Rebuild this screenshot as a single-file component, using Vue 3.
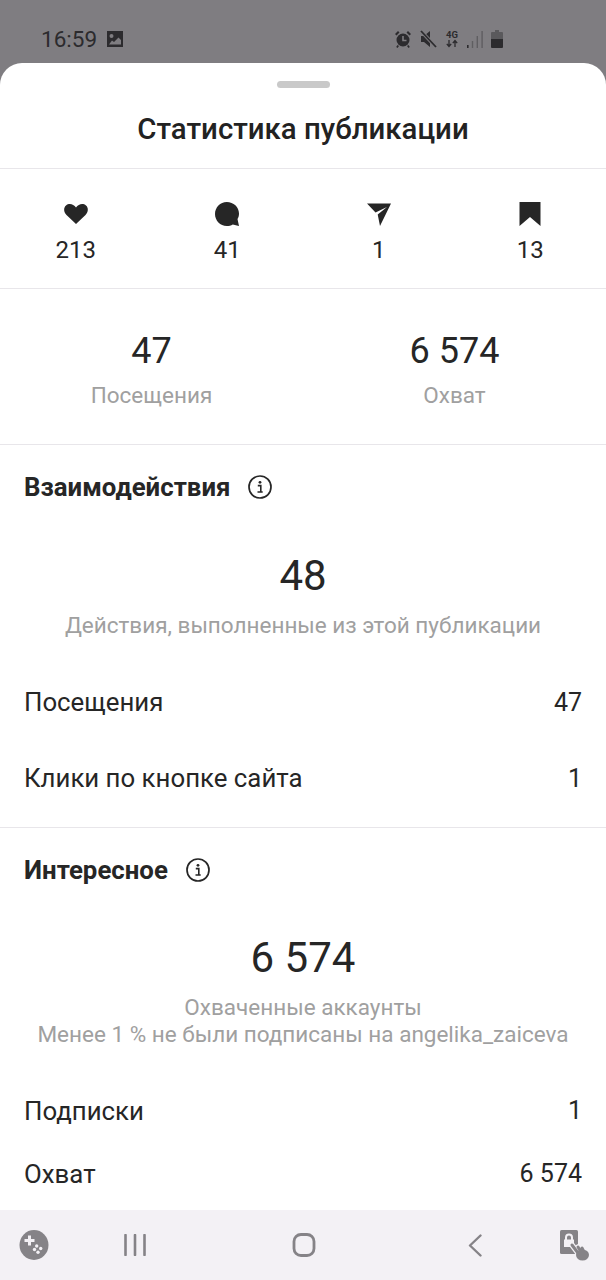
<template>
  <div class="screen">
    <div class="status-bar">
      <span class="clock">16:59</span>
      <svg class="st-pic" viewBox="0 0 18 18" width="18" height="18">
        <path fill-rule="evenodd" d="M1 1h16v16H1zM5.500 4a2 2 0 1 0 0 4 2 2 0 0 0 0-4zM3 14.500h12V10l-2.500-2.500L8 12l-2-1.500z" />
      </svg>
      <div class="st-right">
        <svg viewBox="0 0 18 20" width="18" height="20">
          <circle cx="9" cy="11" r="6.500" />
          <path d="M1 5l3-3 1.500 1.500-3 3zM17 5l-3-3-1.500 1.500 3 3zM3.500 16l1.500 1-1.500 2-1.300-1zM14.500 16l-1.500 1 1.500 2 1.300-1z" />
          <path d="M9 7v4.500h3.500" fill="none" stroke="#7f7d81" stroke-width="1.600" />
        </svg>
        <svg viewBox="0 0 17 18" width="17" height="18">
          <path d="M1 6h3l6-5v16l-6-5H1z" />
          <path d="M1 1l15 16" stroke="#7f7d81" stroke-width="3.500" />
          <path d="M1 1l15 16" stroke="#2c2b2e" stroke-width="1.800" />
        </svg>
        <svg class="st-net" viewBox="0 0 14 18" width="14" height="18">
          <text x="7" y="7.500" text-anchor="middle" class="st-4g">4G</text>
          <path d="M4 10v6M1.800 13.800L4 16.500l2.200-2.700M10 17v-6M7.800 13.200L10 10.500l2.200 2.700" fill="none" stroke="#2c2b2e" stroke-width="1.300" />
        </svg>
        <svg class="st-signal" viewBox="0 0 16 17" width="16" height="17">
          <rect x="0" y="14" width="1.600" height="3" fill="#2c2b2e" />
          <rect x="4.800" y="10" width="1.400" height="7" />
          <rect x="9.600" y="5" width="1.400" height="12" />
          <rect x="14.400" y="0" width="1.400" height="17" />
        </svg>
        <svg class="st-batt" viewBox="0 0 12 18" width="12" height="18">
          <path d="M4 0h4v2h3a1 1 0 0 1 1 1v6H0V3a1 1 0 0 1 1-1h3z" fill="#5a595c" />
          <path d="M0 9h12v8a1 1 0 0 1-1 1H1a1 1 0 0 1-1-1z" />
        </svg>
      </div>
    </div>

    <div class="sheet">
      <div class="head">
        <div class="handle"></div>
        <h1 class="title">Статистика публикации</h1>
      </div>

      <div class="icons-row">
        <div v-for="s in stats" :key="s.name" class="icon-stat">
          <svg viewBox="0 0 26 26" width="26" height="26" v-html="s.icon"></svg>
          <span>{{ s.value }}</span>
        </div>
      </div>

      <div class="totals">
        <div class="total">
          <div class="num">47</div>
          <div class="muted">Посещения</div>
        </div>
        <div class="total">
          <div class="num">6 574</div>
          <div class="muted">Охват</div>
        </div>
      </div>

      <section v-for="sec in sections" :key="sec.title" :class="['section', sec.cls]">
        <div class="sec-head">
          <h2>{{ sec.title }}</h2>
          <svg viewBox="0 0 24 24" width="24" height="24">
            <circle cx="12" cy="12" r="11" fill="none" stroke="#262626" stroke-width="1.700" />
            <circle cx="12" cy="7.300" r="1.400" fill="#262626" />
            <path d="M9.800 10.600h3v6.200M9.500 17h5.200" fill="none" stroke="#262626" stroke-width="1.600" />
          </svg>
        </div>
        <div class="big">{{ sec.big }}</div>
        <div class="muted caption">
          <div v-for="line in sec.caption" :key="line">{{ line }}</div>
        </div>
        <div class="rows">
          <div v-for="row in sec.rows" :key="row[0]" class="row">
            <span class="row-label">{{ row[0] }}</span>
            <span>{{ row[1] }}</span>
          </div>
        </div>
      </section>

      <div class="spacer"></div>

      <div class="nav-bar">
        <svg viewBox="0 0 30 30" width="30" height="30">
          <ellipse cx="15" cy="15" rx="14.500" ry="15" fill="#858387" />
          <path d="M5.500 9h3.500V5.500h3V9h3.500v3H12v3.500H9V12H5.500z" fill="#f3f1f5" />
          <circle cx="17.700" cy="16" r="1.700" fill="#f3f1f5" />
          <circle cx="21.700" cy="18.500" r="1.700" fill="#f3f1f5" />
          <circle cx="15.500" cy="19.500" r="1.700" fill="#f3f1f5" />
          <circle cx="19" cy="22.300" r="1.700" fill="#f3f1f5" />
        </svg>
        <svg viewBox="0 0 22 22" width="22" height="22">
          <path d="M1.500 1v20M11 1v20M20.500 1v20" stroke="#858387" stroke-width="2.600" stroke-linecap="round" />
        </svg>
        <svg viewBox="0 0 24 24" width="24" height="24">
          <rect x="2" y="1.500" width="20" height="21" rx="7" fill="none" stroke="#858387" stroke-width="2.800" />
        </svg>
        <svg viewBox="0 0 14 23" width="14" height="23">
          <path d="M12.500 1.500L2 11.500l10.500 10" fill="none" stroke="#858387" stroke-width="2.400" stroke-linecap="round" stroke-linejoin="round" />
        </svg>
        <svg class="lock-icon" viewBox="0 0 30 31" width="30" height="31">
          <rect x="0" y="0" width="18" height="24" rx="1.500" fill="#858387" />
          <path d="M5 9.500V7.500a4 4 0 0 1 8 0v2h1V17H4V9.500zM7 9.500h4v-2a2 2 0 0 0-4 0z" fill="#f3f1f5" fill-rule="evenodd" />
          <g fill="none" stroke="#f3f1f5" stroke-width="5.500" stroke-linecap="round">
            <path d="M12 15l6 8M18 17l3 5M22 18l2 4" />
          </g>
          <ellipse cx="22.500" cy="25" rx="7" ry="6" fill="#f3f1f5" />
          <g fill="none" stroke="#858387" stroke-width="3" stroke-linecap="round">
            <path d="M12 15l6 8M18 17l3 5M22 18l2 4" />
          </g>
          <ellipse cx="22.500" cy="25" rx="6.500" ry="5.500" fill="#858387" />
        </svg>
      </div>
    </div>
  </div>
</template>

<script setup>
const stats = [
  {
    name: 'likes',
    value: '213',
    icon: '<path fill="#262626" d="M13 23 3.500 14C.5 11 .5 6.500 3 4.500c3-2.500 7.500-1.500 10 2 2.500-3.500 7-4.500 10-2 2.500 2 2.500 6.500-.5 9.500z"/>'
  },
  {
    name: 'comments',
    value: '41',
    icon: '<path fill="#262626" d="M12.800 1C19.500 1 25 6 25 12.500c0 2.200-.5 4-1.500 5.500l1.500 7-6.200-1.500c-1.800 1-3.800 1.500-6 1.500C6.200 25 1 19.500 1 13 1 6.500 6.200 1 12.800 1z"/>'
  },
  {
    name: 'shares',
    value: '1',
    icon: '<path fill="#262626" d="M1 2.500h24L14 25l-2.300-11.500L21 6 9.500 11.500z"/>'
  },
  {
    name: 'saves',
    value: '13',
    icon: '<path fill="#262626" d="M2.500 1h21v24l-10.500-9-10.500 9z"/>'
  }
]

const sections = [
  {
    title: 'Взаимодействия',
    cls: 'first',
    big: '48',
    caption: ['Действия, выполненные из этой публикации'],
    rows: [['Посещения', '47'], ['Клики по кнопке сайта', '1']]
  },
  {
    title: 'Интересное',
    cls: 'second',
    big: '6 574',
    caption: ['Охваченные аккаунты', 'Менее 1 % не были подписаны на angelika_zaiceva'],
    rows: [['Подписки', '1'], ['Охват', '6 574']]
  }
]
</script>

<style>
html, body {
  margin: 0;
  background: #7f7d81;
}
</style>

<style scoped>
.screen {
  width: 606px;
  height: 1280px;
  display: flex;
  flex-direction: column;
  overflow: hidden;
  background: #7f7d81;
  font-family: Roboto, "Liberation Sans", sans-serif;
  color: #262626;
}

.status-bar {
  height: 63px;
  flex: none;
  display: flex;
  align-items: center;
  padding: 15px 103px 0 41px;
  box-sizing: border-box;
  color: #2c2b2e;
  fill: #2c2b2e;
}

.clock {
  font-size: 22.500px;
  margin-right: 9px;
}

.st-right {
  margin-left: auto;
  display: flex;
  align-items: center;
  gap: 8px;
}

.st-4g {
  font: 700 9.500px Roboto, sans-serif;
  fill: #2c2b2e;
}

.st-signal {
  fill: #5f5e61;
}

.sheet {
  flex: 1;
  background: #fff;
  border-radius: 22px 22px 0 0;
  display: flex;
  flex-direction: column;
}

.head {
  height: 105px;
  flex: none;
  border-bottom: 1px solid #e8e6ea;
  display: flex;
  flex-direction: column;
  align-items: center;
}

.handle {
  width: 53px;
  height: 7px;
  margin-top: 18px;
  border-radius: 4px;
  background: #c9c9c9;
}

.title {
  margin: 23px 0 0;
  font-size: 29.400px;
  line-height: 36px;
  font-weight: 500;
  color: #222;
}

.icons-row {
  height: 120px;
  flex: none;
  display: grid;
  grid-template-columns: repeat(4, 151.500px);
  justify-items: center;
  align-content: start;
  padding-top: 32px;
  box-sizing: border-box;
  border-bottom: 1px solid #e8e6ea;
}

.icon-stat {
  display: flex;
  flex-direction: column;
  align-items: center;
  font-size: 24px;
  line-height: 30px;
}

.icon-stat svg {
  margin-bottom: 8px;
}

.totals {
  height: 156px;
  flex: none;
  display: grid;
  grid-template-columns: 1fr 1fr;
  text-align: center;
  padding-top: 40px;
  box-sizing: border-box;
  border-bottom: 1px solid #e8e6ea;
}

.num {
  font-size: 36px;
  line-height: 44px;
  margin-bottom: 9px;
}

.muted {
  font-size: 22.500px;
  line-height: 27px;
  color: #a0a0a0;
}

.section {
  flex: none;
  padding: 0 24px;
  box-sizing: border-box;
}

.section.first {
  height: 383px;
  border-bottom: 1px solid #e8e6ea;
}

.sec-head {
  display: flex;
  align-items: center;
  gap: 18px;
  height: 30px;
  padding-top: 27px;
}

.sec-head h2 {
  margin: 0;
  font-size: 25.800px;
  line-height: 30px;
  font-weight: 700;
}

.big {
  text-align: center;
  font-size: 42px;
  line-height: 52px;
  margin-top: 48px;
}

.second .big {
  margin-top: 47px;
}

.caption {
  text-align: center;
  margin-top: 10px;
}

.rows {
  margin-top: 25px;
}

.row {
  display: flex;
  justify-content: space-between;
  align-items: center;
  font-size: 25px;
  height: 76px;
}

.row-label {
  font-size: 25.800px;
}

.second .rows {
  margin-top: 31px;
}

.second .row {
  height: 63px;
}

.spacer {
  flex: 1;
}

.nav-bar {
  height: 70px;
  flex: none;
  background: #f3f1f5;
  display: grid;
  grid-template-columns: 67px 136px 202px 139px 60px;
  justify-items: center;
  align-items: center;
}

.lock-icon {
  margin-left: 2px;
}
</style>
